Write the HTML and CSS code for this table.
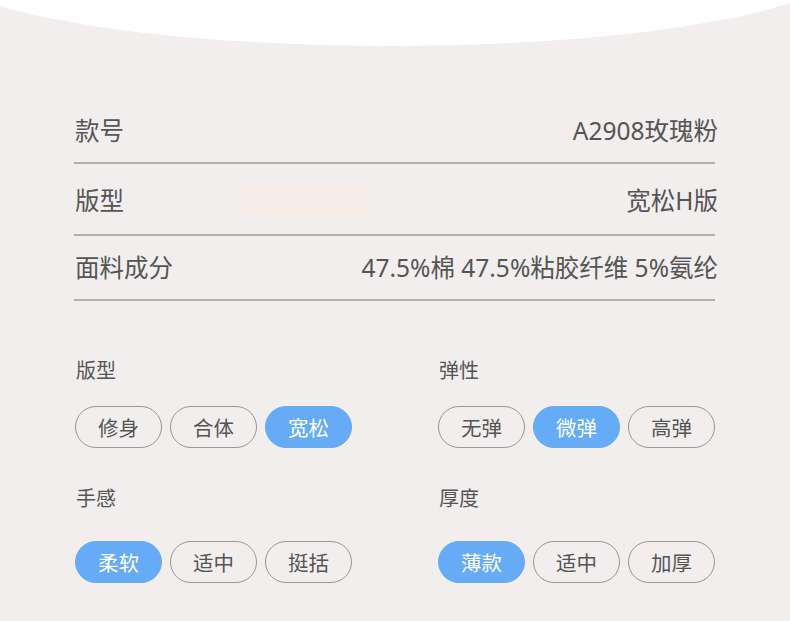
FILE: index.html
```html
<!DOCTYPE html>
<html lang="zh-CN">
<head>
<meta charset="utf-8">
<title>商品参数</title>
<link rel="stylesheet" href="styles.css">
</head>
<body>
<div class="page">
  <div class="arc"></div>
  <section class="specs">
    <div class="spec-row">
      <span class="spec-label">款号</span>
      <span class="spec-value">A2908玫瑰粉</span>
    </div>
    <div class="spec-row spec-row-tall">
      <span class="spec-label">版型</span>
      <span class="spec-blur"></span>
      <span class="spec-value">宽松H版</span>
    </div>
    <div class="spec-row">
      <span class="spec-label">面料成分</span>
      <span class="spec-value">47.5%棉 47.5%粘胶纤维 5%氨纶</span>
    </div>
  </section>
  <section class="attrs">
    <div class="attr">
      <div class="attr-title">版型</div>
      <div class="pills">
        <span class="pill">修身</span>
        <span class="pill">合体</span>
        <span class="pill pill-on">宽松</span>
      </div>
    </div>
    <div class="attr attr-right">
      <div class="attr-title">弹性</div>
      <div class="pills">
        <span class="pill">无弹</span>
        <span class="pill pill-on">微弹</span>
        <span class="pill">高弹</span>
      </div>
    </div>
    <div class="attr attr-low">
      <div class="attr-title">手感</div>
      <div class="pills">
        <span class="pill pill-on">柔软</span>
        <span class="pill">适中</span>
        <span class="pill">挺括</span>
      </div>
    </div>
    <div class="attr attr-low attr-right">
      <div class="attr-title">厚度</div>
      <div class="pills">
        <span class="pill pill-on">薄款</span>
        <span class="pill">适中</span>
        <span class="pill">加厚</span>
      </div>
    </div>
  </section>
</div>
</body>
</html>
```

FILE: styles.css
```css
* { box-sizing: border-box; }

html, body {
  margin: 0;
  padding: 0;
  background: #f2eeed;
}

body {
  font-family: "Noto Sans", "Noto Sans CJK SC", sans-serif;
  color: #555;
}

.page {
  position: relative;
  width: 790px;
  height: 621px;
  overflow: hidden;
  padding-top: 99px;
}

.arc {
  position: absolute;
  left: -70px;
  top: -124px;
  width: 920px;
  height: 170px;
  border-radius: 50%;
  background: #fff;
}

.specs {
  margin: 0 75px 0 74px;
}

.spec-row {
  display: flex;
  align-items: center;
  padding: 16px 0 15px 1px;
  border-bottom: 2px solid #b3afae;
  font-size: 24.5px;
  line-height: 32px;
}

.spec-row-tall {
  padding: 21px 0 17px 1px;
}

.spec-blur {
  width: 127px;
  height: 32px;
  margin-left: 117px;
  background: #f5ebe7;
}

.spec-value {
  margin-left: auto;
  margin-right: -3px;
}

.attrs {
  display: grid;
  grid-template-columns: 362px 1fr;
  row-gap: 37px;
  margin: 56px 0 0 75px;
}

.attr-title {
  font-size: 20px;
  line-height: 28px;
  margin: 0 0 21px 1px;
  color: #555;
}

.attr-low .attr-title {
  margin-bottom: 28px;
}

.attr-right {
  margin-left: 1px;
}

.pills {
  display: flex;
  gap: 8px;
}

.pill {
  width: 87px;
  height: 42px;
  border: 1px solid #9b9695;
  border-radius: 21px;
  display: flex;
  align-items: center;
  justify-content: center;
  font-size: 20.5px;
  color: #555;
}

.pill-on {
  background: #65abf6;
  border-color: #65abf6;
  color: #fff;
}
```
